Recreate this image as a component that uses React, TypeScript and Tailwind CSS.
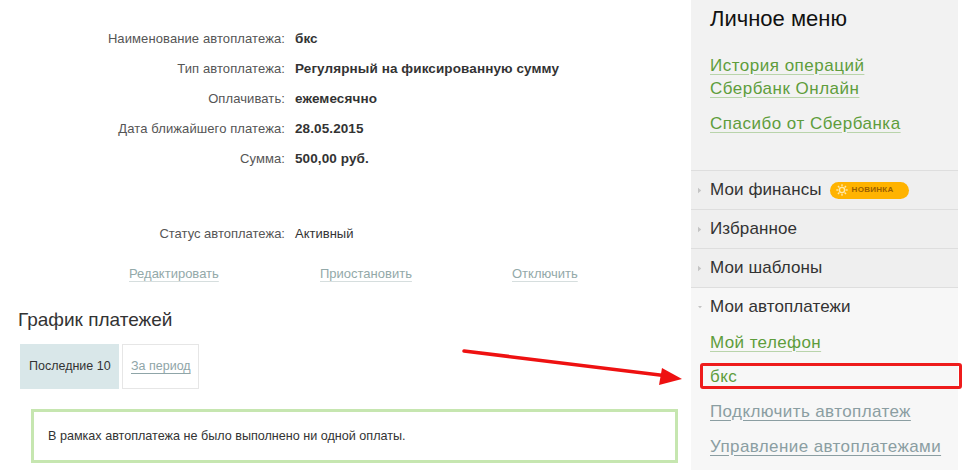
import React from "react";

type Row = { label: string; value: string; bold?: boolean };

const rows: Row[] = [
  { label: "Наименование автоплатежа:", value: "бкс", bold: true },
  { label: "Тип автоплатежа:", value: "Регулярный на фиксированную сумму", bold: true },
  { label: "Оплачивать:", value: "ежемесячно", bold: true },
  { label: "Дата ближайшего платежа:", value: "28.05.2015", bold: true },
  { label: "Сумма:", value: "500,00 руб.", bold: true },
];

const Sun = () => (
  <svg width="12" height="12" viewBox="0 0 12 12">
    <circle cx="6" cy="6" r="2.6" fill="none" stroke="#ffe9a8" strokeWidth="1.4" />
    {[0, 45, 90, 135, 180, 225, 270, 315].map((a) => (
      <rect key={a} x="5.3" y="0.3" width="1.4" height="2" fill="#ffe9a8" transform={`rotate(${a} 6 6)`} />
    ))}
  </svg>
);

const Tri = ({ open }: { open?: boolean }) => (
  <span className="w-[11px] flex items-center justify-start pl-[7px]">
    {open ? (
      <svg width="7" height="5" viewBox="0 0 7 5">
        <path d="M0 0 L7 0 L3.5 4 Z" fill="#c4c4c4" />
      </svg>
    ) : (
      <svg width="5" height="7" viewBox="0 0 5 7">
        <path d="M0 0 L4 3.5 L0 7 Z" fill="#c4c4c4" />
      </svg>
    )}
  </span>
);

const MenuRow = ({ title, badge, open }: { title: string; badge?: boolean; open?: boolean }) => (
  <div
    className={`flex items-center h-[39px] border-t border-[#dedede] ${open ? "bg-[#f7f7f7]" : "bg-[#efefef]"}`}
  >
    <Tri open={open} />
    <span className="ml-[8px] text-[17px] tracking-[0.1px] text-[#333]">{title}</span>
    {badge && (
      <span className="ml-[8px] h-[17px] w-[79px] rounded-full bg-[#ffb300] flex items-center pl-[6px] gap-[4px]">
        <Sun />
        <span className="text-[8px] font-bold text-[#9a5f00] tracking-[0.3px]">НОВИНКА</span>
      </span>
    )}
  </div>
);

export default function App() {
  return (
    <div
      className="relative w-[964px] h-[470px] bg-white overflow-hidden flex"
      style={{ fontFamily: '"Liberation Sans", Arial, sans-serif' }}
    >
      {/* MAIN */}
      <div className="w-[691px] shrink-0 flex flex-col">
        <div className="pt-[24px] grid grid-cols-[285px_1fr] text-[13px]">
          {rows.map((r) => (
            <React.Fragment key={r.label}>
              <div className="h-[30px] flex items-center justify-end text-[#555] tracking-[0.1px]">{r.label}</div>
              <div className="h-[30px] flex items-center pl-[10px] font-bold text-[13.5px] tracking-[0.1px] text-[#333]">{r.value}</div>
            </React.Fragment>
          ))}
          <div className="mt-[45px] h-[30px] flex items-center justify-end text-[#555]">Статус автоплатежа:</div>
          <div className="mt-[45px] h-[30px] flex items-center pl-[10px] text-[#333]">Активный</div>
        </div>

        <div className="flex pl-[129px] mt-[15px] h-[20px] items-center text-[13px] text-[#93a9a9]">
          <span className="w-[191px]"><span className="underline decoration-[#d6dede] underline-offset-[3px]">Редактировать</span></span>
          <span className="w-[192px]"><span className="underline decoration-[#d6dede] underline-offset-[3px]">Приостановить</span></span>
          <span><span className="underline decoration-[#d6dede] underline-offset-[3px]">Отключить</span></span>
        </div>

        <div className="pl-[18px] mt-[25px] text-[19px] text-[#333] leading-[22px]">График платежей</div>

        <div className="pl-[20px] mt-[13px] flex gap-[3px] text-[12.5px]">
          <div className="w-[99px] h-[45px] bg-[#d9e7e9] flex items-center pl-[9px] text-[#333]">Последние 10</div>
          <div className="w-[77px] h-[45px] border border-[#e6e6e6] flex items-center pl-[8px] text-[#8fa5a8]">
            <span className="underline underline-offset-[3px]">За период</span>
          </div>
        </div>

        <div className="ml-[31px] mt-[20px] w-[647px] h-[54px] border-[3px] border-[#c6e6b0] flex items-center pl-[14px] text-[12.6px] text-[#333]">
          В рамках автоплатежа не было выполнено ни одной оплаты.
        </div>
      </div>

      {/* SIDEBAR */}
      <div className="w-[267px] shrink-0 flex flex-col bg-[#f7f7f7]">
        <div className="h-[170px] bg-[#f2f2f2] pl-[19px]">
          <div className="pt-[6px] text-[22px] text-[#111] leading-[26px]">Личное меню</div>
          <div className="mt-[22px] text-[17px] tracking-[0.5px] leading-[23px] text-[#5e9d3c]">
            <span className="underline decoration-[#b9d4ab] underline-offset-[3px]">История операций</span>
            <br />
            <span className="underline decoration-[#b9d4ab] underline-offset-[3px]">Сбербанк Онлайн</span>
          </div>
          <div className="mt-[12px] text-[17px] tracking-[0.5px] leading-[23px] text-[#5e9d3c]">
            <span className="underline decoration-[#b9d4ab] underline-offset-[3px]">Спасибо от Сбербанка</span>
          </div>
        </div>
        <MenuRow title="Мои финансы" badge />
        <MenuRow title="Избранное" />
        <MenuRow title="Мои шаблоны" />
        <MenuRow title="Мои автоплатежи" open />
        <div className="pl-[19px] text-[17px] tracking-[0.4px] flex flex-col">
          <div className="h-[33px] flex items-center text-[#5e9d3c]">
            <span className="underline decoration-[#b9d4ab] underline-offset-[3px]">Мой телефон</span>
          </div>
          <div className="relative h-[35px] flex items-center text-[#5e9d3c]">
            <span>бкс</span>
            <div className="absolute left-[-10px] right-[-4px] top-[4px] h-[26px] border-[3px] border-[#ee1c1c] rounded-[3px]" />
          </div>
          <div className="h-[35px] flex items-center text-[#8b9ea2]">
            <span className="underline underline-offset-[3px]">Подключить автоплатеж</span>
          </div>
          <div className="h-[35px] flex items-center text-[#8b9ea2]">
            <span className="underline underline-offset-[3px]">Управление автоплатежами</span>
          </div>
        </div>
      </div>

      {/* annotation arrow */}
      <svg className="absolute left-0 top-0 pointer-events-none" width="964" height="470">
        <line x1="464" y1="351" x2="668" y2="376" stroke="#ee1111" strokeWidth="3.5" strokeLinecap="round" />
        <path d="M682 379 L662 368 L659 385 Z" fill="#ee1111" />
      </svg>
    </div>
  );
}
